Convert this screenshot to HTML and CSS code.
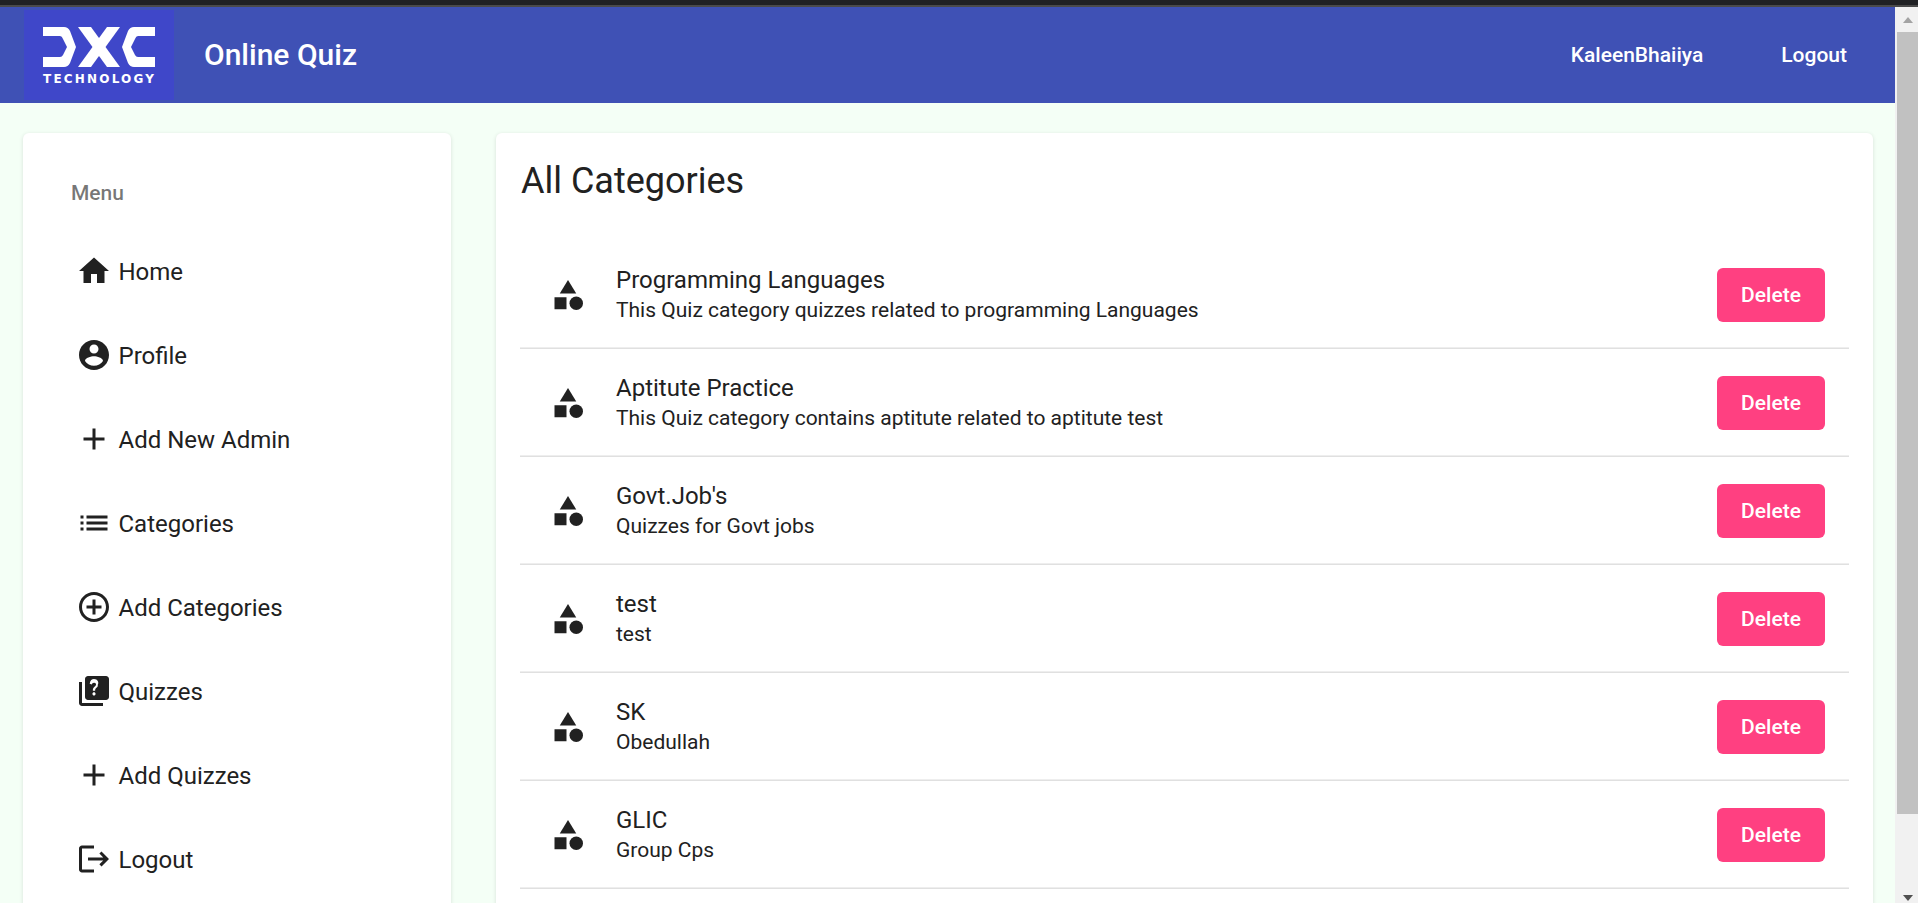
FILE: index.html
```html
<!DOCTYPE html>
<html lang="en">
<head>
<meta charset="utf-8">
<title>Online Quiz</title>
<link rel="stylesheet" href="styles.css">
</head>
<body>
<div class="chrome-line"></div>
<div class="viewport">
  <div class="page">
    <header class="toolbar">
      <div class="logo">
        <svg class="logo-svg" viewBox="0 0 150 90" aria-label="DXC Technology logo">
          <path class="logo-fill" d="M19 17H40Q44 17 46 21L52 37L46 53Q44 57 40 57H19V47H36Q38 47 39 45L43 37L39 29Q38 26 36 26H19Z"/>
          <path class="logo-fill" d="M131 17H110Q106 17 104 21L98 37L104 53Q106 57 110 57H131V47H114Q112 47 111 45L107 37L111 29Q112 26 114 26H131Z"/>
          <path class="logo-fill" d="M54 17H67L96 57H83Z"/>
          <path class="logo-fill" d="M96 17H83L54 57H67Z"/>
          <text class="logo-text" x="19" y="73" textLength="111" lengthAdjust="spacing">TECHNOLOGY</text>
        </svg>
      </div>
      <span class="brand">Online Quiz</span>
      <span class="spacer"></span>
      <nav class="top-nav">
        <a class="top-link">KaleenBhaiiya</a>
        <a class="top-link">Logout</a>
      </nav>
    </header>

    <div class="content">
      <aside class="card sidebar">
        <div class="menu-title">Menu</div>
        <a class="nav-item"><svg class="nav-icon" viewBox="0 0 24 24"><path d="M10 20v-6h4v6h5v-8h3L12 3 2 12h3v8z"/></svg><span class="nav-label">Home</span></a>
        <a class="nav-item"><svg class="nav-icon" viewBox="0 0 24 24"><path d="M12 2C6.48 2 2 6.48 2 12s4.48 10 10 10 10-4.48 10-10S17.52 2 12 2zm0 3c1.66 0 3 1.34 3 3s-1.34 3-3 3-3-1.34-3-3 1.34-3 3-3zm0 14.2c-2.5 0-4.71-1.28-6-3.22.03-1.99 4-3.08 6-3.08 1.99 0 5.97 1.09 6 3.08-1.29 1.94-3.5 3.22-6 3.22z"/></svg><span class="nav-label">Profile</span></a>
        <a class="nav-item"><svg class="nav-icon" viewBox="0 0 24 24"><path d="M19 13h-6v6h-2v-6H5v-2h6V5h2v6h6v2z"/></svg><span class="nav-label">Add New Admin</span></a>
        <a class="nav-item"><svg class="nav-icon" viewBox="0 0 24 24"><path d="M3 13h2v-2H3v2zm0 4h2v-2H3v2zm0-8h2V7H3v2zm4 4h14v-2H7v2zm0 4h14v-2H7v2zM7 7v2h14V7H7z"/></svg><span class="nav-label">Categories</span></a>
        <a class="nav-item"><svg class="nav-icon" viewBox="0 0 24 24"><path d="M13 7h-2v4H7v2h4v4h2v-4h4v-2h-4V7zm-1-5C6.48 2 2 6.48 2 12s4.48 10 10 10 10-4.48 10-10S17.52 2 12 2zm0 18c-4.41 0-8-3.59-8-8s3.59-8 8-8 8 3.59 8 8-3.59 8-8 8z"/></svg><span class="nav-label">Add Categories</span></a>
        <a class="nav-item"><svg class="nav-icon" viewBox="0 0 24 24"><path d="M4 6H2v14c0 1.1.9 2 2 2h14v-2H4V6zm16-4H8c-1.1 0-2 .9-2 2v12c0 1.1.9 2 2 2h12c1.1 0 2-.9 2-2V4c0-1.1-.9-2-2-2zm-7.99 13c-.59 0-1.05-.47-1.05-1.05 0-.59.47-1.04 1.05-1.04.59 0 1.04.45 1.04 1.04-.01.58-.45 1.05-1.04 1.05zm2.5-6.17c-.63.93-1.23 1.21-1.56 1.81-.13.24-.18.4-.18 1.18h-1.52c0-.41-.06-1.08.26-1.65.41-.73 1.18-1.16 1.63-1.8.48-.68.21-1.94-1.14-1.94-.88 0-1.32.67-1.5 1.23l-1.37-.57C9.51 4.96 10.52 4 11.99 4c1.23 0 2.08.56 2.51 1.26.37.61.58 1.73.01 2.57z"/></svg><span class="nav-label">Quizzes</span></a>
        <a class="nav-item"><svg class="nav-icon" viewBox="0 0 24 24"><path d="M19 13h-6v6h-2v-6H5v-2h6V5h2v6h6v2z"/></svg><span class="nav-label">Add Quizzes</span></a>
        <a class="nav-item"><svg class="nav-icon" viewBox="0 0 24 24"><path d="M17 7l-1.41 1.41L18.17 11H8v2h10.17l-2.58 2.58L17 17l5-5zM4 5h8V3H4c-1.1 0-2 .9-2 2v14c0 1.1.9 2 2 2h8v-2H4V5z"/></svg><span class="nav-label">Logout</span></a>
      </aside>

      <main class="card main-card">
        <h1 class="title">All Categories</h1>
        <div class="cat-list">
          <div class="cat-row">
            <svg class="cat-icon" viewBox="0 0 24 24"><path d="M12 2l-5.5 9h11z"/><circle cx="17.5" cy="17.5" r="4.5"/><path d="M3 13.5h8v8H3z"/></svg>
            <div class="cat-text"><div class="cat-name">Programming Languages</div><div class="cat-desc">This Quiz category quizzes related to programming Languages</div></div>
            <button class="delete-btn">Delete</button>
          </div>
          <div class="cat-row">
            <svg class="cat-icon" viewBox="0 0 24 24"><path d="M12 2l-5.5 9h11z"/><circle cx="17.5" cy="17.5" r="4.5"/><path d="M3 13.5h8v8H3z"/></svg>
            <div class="cat-text"><div class="cat-name">Aptitute Practice</div><div class="cat-desc">This Quiz category contains aptitute related to aptitute test</div></div>
            <button class="delete-btn">Delete</button>
          </div>
          <div class="cat-row">
            <svg class="cat-icon" viewBox="0 0 24 24"><path d="M12 2l-5.5 9h11z"/><circle cx="17.5" cy="17.5" r="4.5"/><path d="M3 13.5h8v8H3z"/></svg>
            <div class="cat-text"><div class="cat-name">Govt.Job's</div><div class="cat-desc">Quizzes for Govt jobs</div></div>
            <button class="delete-btn">Delete</button>
          </div>
          <div class="cat-row">
            <svg class="cat-icon" viewBox="0 0 24 24"><path d="M12 2l-5.5 9h11z"/><circle cx="17.5" cy="17.5" r="4.5"/><path d="M3 13.5h8v8H3z"/></svg>
            <div class="cat-text"><div class="cat-name">test</div><div class="cat-desc">test</div></div>
            <button class="delete-btn">Delete</button>
          </div>
          <div class="cat-row">
            <svg class="cat-icon" viewBox="0 0 24 24"><path d="M12 2l-5.5 9h11z"/><circle cx="17.5" cy="17.5" r="4.5"/><path d="M3 13.5h8v8H3z"/></svg>
            <div class="cat-text"><div class="cat-name">SK</div><div class="cat-desc">Obedullah</div></div>
            <button class="delete-btn">Delete</button>
          </div>
          <div class="cat-row">
            <svg class="cat-icon" viewBox="0 0 24 24"><path d="M12 2l-5.5 9h11z"/><circle cx="17.5" cy="17.5" r="4.5"/><path d="M3 13.5h8v8H3z"/></svg>
            <div class="cat-text"><div class="cat-name">GLIC</div><div class="cat-desc">Group Cps</div></div>
            <button class="delete-btn">Delete</button>
          </div>
        </div>
      </main>
    </div>
  </div>

  <div class="scrollbar">
    <div class="arrow-box"><span class="arrow-up"></span></div>
    <div class="track"><div class="thumb"></div></div>
    <div class="arrow-box"><span class="arrow-down"></span></div>
  </div>
</div>
</body>
</html>
```

FILE: styles.css
```css
* { box-sizing: border-box; }

html, body {
  margin: 0;
  height: 903px;
  overflow: hidden;
}

body {
  display: flex;
  flex-direction: column;
  font-family: Roboto, "Liberation Sans", sans-serif;
  color: #212121;
  background: #f4fff6;
}

.chrome-line {
  height: 7px;
  flex: none;
  background: #202124;
  border-bottom: 2px solid #4a4a4a;
}

.viewport {
  flex: 1;
  min-height: 0;
  display: flex;
}

.page {
  flex: 1;
  min-width: 0;
  overflow: hidden;
}

/* Toolbar */
.toolbar {
  height: 96px;
  display: flex;
  align-items: center;
  padding: 0 24px;
  background: #3f51b5;
  color: #fff;
}

.logo {
  width: 150px;
  height: 90px;
  flex: none;
  background: #3f47c9;
}

.logo-svg {
  display: block;
  width: 150px;
  height: 90px;
}

.logo-fill { fill: #fff; }

.logo-text {
  font-family: "DejaVu Sans", sans-serif;
  font-size: 12px;
  font-weight: 700;
  fill: #fff;
}

.brand {
  margin-left: 30px;
  font-size: 30px;
  font-weight: 500;
  line-height: 36px;
}

.spacer { flex: 1; }

.top-nav {
  display: flex;
  gap: 30px;
}

.top-link {
  padding: 0 24px;
  font-size: 21px;
  font-weight: 500;
  line-height: 54px;
}

/* Content */
.content {
  display: flex;
  align-items: flex-start;
  gap: 45px;
  padding: 30px 22px 0 23px;
}

.card {
  background: #fff;
  border-radius: 6px;
  box-shadow: 0 1px 4px rgba(0, 0, 0, .12);
}

.sidebar {
  width: 428px;
  flex: none;
  padding: 24px 0;
}

.menu-title {
  height: 72px;
  padding-left: 48px;
  font-size: 21px;
  font-weight: 500;
  line-height: 72px;
  color: rgba(0, 0, 0, .54);
}

.nav-item {
  height: 84px;
  display: flex;
  align-items: center;
  gap: 6.5px;
  padding-left: 53px;
  font-size: 24px;
}

.nav-label {
  padding-top: 2px;
}

.nav-icon {
  width: 36px;
  height: 36px;
  flex: none;
  fill: #212121;
}

.main-card {
  flex: 1;
  min-width: 0;
  padding: 24px;
}

.title {
  margin: 6px 0 41px 1px;
  font-size: 36px;
  font-weight: 400;
  line-height: 37px;
}

.cat-row {
  height: 108px;
  display: flex;
  align-items: center;
  padding: 0 24px 0 30px;
  border-bottom: 1px solid #e0e0e0;
  box-shadow: inset 0 -1px 0 #eeeeee;
}

.cat-icon {
  width: 36px;
  height: 36px;
  flex: none;
  fill: #212121;
}

.cat-text {
  flex: 1;
  min-width: 0;
  margin-left: 30px;
}

.cat-name {
  font-size: 24px;
  line-height: 30px;
}

.cat-desc {
  font-size: 21px;
  line-height: 30px;
}

.delete-btn {
  width: 108px;
  height: 54px;
  padding: 0;
  border: 0;
  border-radius: 6px;
  background: #ff4081;
  color: #fff;
  font-family: inherit;
  font-size: 21px;
  font-weight: 500;
}

/* Scrollbar */
.scrollbar {
  width: 23px;
  flex: none;
  display: flex;
  flex-direction: column;
  background: #f1f1f1;
}

.arrow-box {
  height: 25px;
  flex: none;
  display: flex;
  align-items: center;
  justify-content: center;
  padding-left: 2px;
}

.arrow-up {
  border: 5.5px solid transparent;
  border-top: 0;
  border-bottom: 6px solid #a3a3a3;
}

.arrow-down {
  border: 5.5px solid transparent;
  border-bottom: 0;
  border-top: 6px solid #505050;
  margin-top: 14px;
}

.track {
  flex: 1;
  padding-left: 2px;
}

.thumb {
  height: 782px;
  background: #c1c1c1;
}
```
